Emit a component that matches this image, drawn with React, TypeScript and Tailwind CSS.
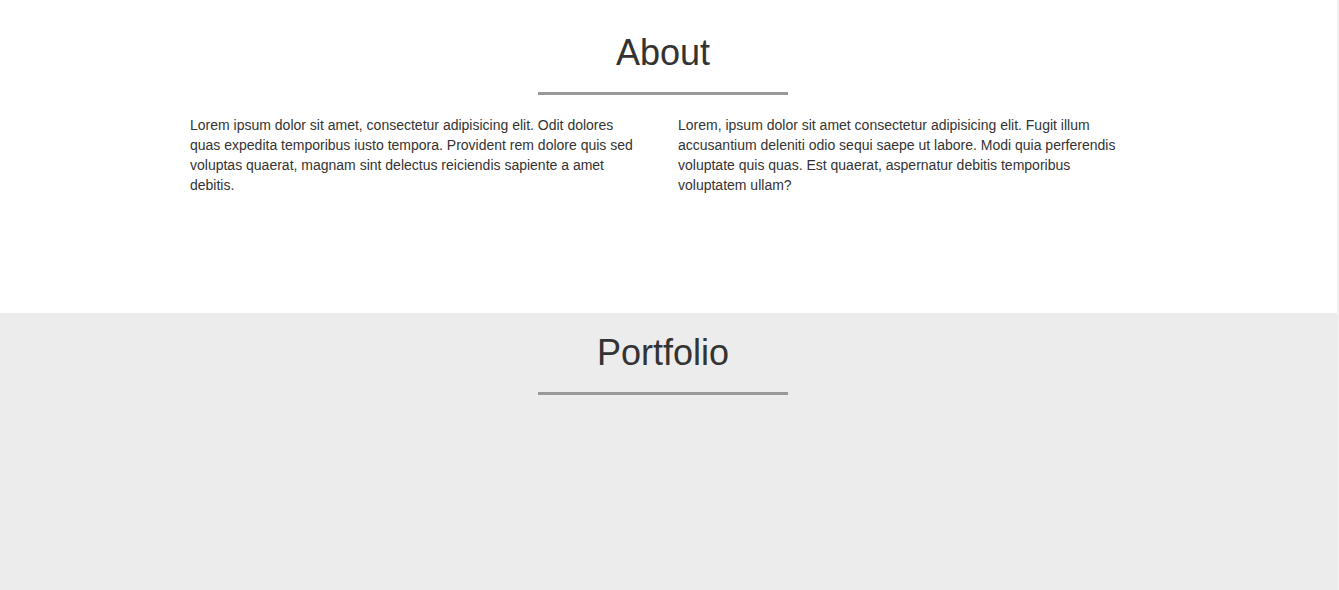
import React from 'react';

const aboutColumns = [
  'Lorem ipsum dolor sit amet, consectetur adipisicing elit. Odit dolores quas expedita temporibus iusto tempora. Provident rem dolore quis sed voluptas quaerat, magnam sint delectus reiciendis sapiente a amet debitis.',
  'Lorem, ipsum dolor sit amet consectetur adipisicing elit. Fugit illum accusantium deleniti odio sequi saepe ut labore. Modi quia perferendis voluptate quis quas. Est quaerat, aspernatur debitis temporibus voluptatem ullam?'
];

const SectionTitle: React.FC<{ title: string }> = ({ title }) => (
  <div className="flex flex-col items-center">
    <h2 className="text-4xl leading-10 font-normal text-[#333333]">{title}</h2>
    <div className="w-[250px] h-[3px] bg-[#999999] mt-[19px]" />
  </div>
);

const App: React.FC = () => {
  return (
    <div
      className="flex w-full h-[590px] overflow-hidden bg-white"
      style={{ fontFamily: '"Liberation Sans", Arial, sans-serif' }}
    >
      <div className="flex-1 flex flex-col">
        {/* About */}
        <section className="h-[313px] bg-white pt-[33px] pr-[11px]">
          <SectionTitle title="About" />
          <div className="w-[976px] mx-auto mt-5 grid grid-cols-2">
            {aboutColumns.map((text, idx) => (
              <p key={idx} className="pl-[15px] pr-[23px] text-sm leading-5 text-[#333333]">
                {text}
              </p>
            ))}
          </div>
        </section>

        {/* Portfolio */}
        <section className="flex-1 bg-[#ececec] pt-5 pr-[11px]">
          <SectionTitle title="Portfolio" />
        </section>
      </div>

      {/* right edge strip */}
      <div className="w-[2px] bg-[#f1f1f1]" />
    </div>
  );
};

export default App;
